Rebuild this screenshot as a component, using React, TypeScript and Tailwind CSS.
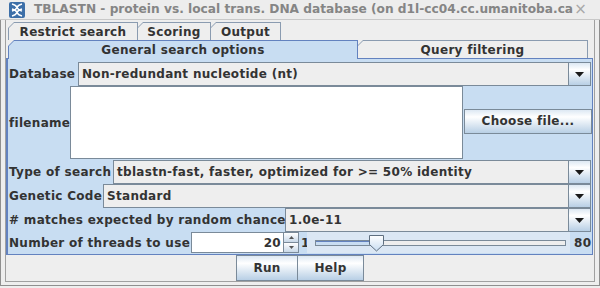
const ink = "text-[#333333]";

function Arrow() {
  return (
    <svg width="9" height="5" viewBox="0 0 9 5">
      <path d="M0 0h9L4.5 5z" fill="#1a1a1a" />
    </svg>
  );
}

function Combo({ value, className }: { value: string; className: string }) {
  return (
    <div className={`flex h-[24px] border border-[#7a8a99] bg-[#eeeeee] ${className}`}>
      <div className={`flex flex-1 items-center pl-[3px] border-r border-[#7a8a99] ${ink}`}>{value}</div>
      <div className="flex w-[21px] items-center justify-center bg-gradient-to-b from-[#dde8f3] via-white via-30% to-[#b8cfe5]">
        <Arrow />
      </div>
    </div>
  );
}

function Tab({ label, className, selected }: { label: string; className: string; selected?: boolean }) {
  return (
    <div
      className={`pt-px pl-px pr-px ${selected ? "bg-[#6382bf] relative z-10 -mb-px h-[19px]" : "h-[18px] bg-[#8a9bb0]"} [clip-path:polygon(6px_0,100%_0,100%_100%,0_100%,0_6px)] ${className}`}
    >
      <div
        className={`flex h-full items-center justify-center ${selected ? "bg-[#c8ddf2]" : "bg-[#eeeeee]"} [clip-path:polygon(5px_0,100%_0,100%_100%,0_100%,0_5px)] ${ink}`}
      >
        {label}
      </div>
    </div>
  );
}

function Button({ label, className }: { label: string; className: string }) {
  return (
    <div
      className={`flex shrink-0 items-center justify-center border border-[#7a8a99] bg-gradient-to-b from-[#dde8f3] via-white via-30% to-[#b8cfe5] ${ink} ${className}`}
    >
      {label}
    </div>
  );
}

export default function App() {
  return (
    <div className="w-[600px] h-[288px] overflow-hidden bg-[#eeeeee] font-['DejaVu_Sans',sans-serif] text-[12px] font-bold leading-none tracking-[0.3px]">
      {/* title bar */}
      <div className="flex h-[20px] items-center border-b border-[#c8c8c8] bg-[#ededed]">
        <svg className="ml-[9px] mr-[9px]" width="16" height="16" viewBox="0 0 16 16">
          <rect x="0" y="0" width="16" height="16" rx="2" fill="#3d6fa8" />
          <path d="M3 2c8 2 2 5 10 7M13 2C5 4 11 7 3 9M3 7c8 2 2 5 10 7M13 7C5 9 11 12 3 14" stroke="#ffffff" strokeWidth="1.4" fill="none" />
        </svg>
        <div className="flex-1 whitespace-nowrap text-[12.2px] tracking-normal text-[#858585]">
          TBLASTN - protein vs. local trans. DNA database (on d1l-cc04.cc.umanitoba.ca
        </div>
        <div className="mr-[13px] text-[15px] font-normal text-[#a8a8a8]">×</div>
      </div>

      <div className="h-[266px] border-l border-[#8f8f8f] border-r border-b">
        <div className="h-[262px] ml-[4px] mr-[4px] border-l border-r border-b border-[#a0a0a0]">
          {/* tab rows */}
          <div className="flex pt-[2px] pl-[2px]">
            <Tab label="Restrict search" className="w-[130px]" />
            <Tab label="Scoring" className="-ml-px w-[74px]" />
            <Tab label="Output" className="-ml-px w-[71px]" />
          </div>
          <div className="flex items-end pl-[2px]">
            <Tab label="General search options" className="w-[350px]" selected />
            <Tab label="Query filtering" className="-ml-px w-[231px]" />
          </div>

          {/* main panel */}
          <div className="w-[587px] h-[197px] border-l-2 border-r border-t border-b border-[#6382bf] bg-[#c8ddf2] pt-[3px] pl-px pr-px">
            <div className="flex items-center">
              <div className={`w-[69px] ${ink}`}>Database</div>
              <Combo value="Non-redundant nucleotide (nt)" className="flex-1" />
            </div>
            <div className="flex h-[74px] items-center">
              <div className={`w-[61px] shrink-0 ${ink}`}>filename</div>
              <div className="h-[73px] w-[393px] shrink-0 self-start border border-[#7a8a99] bg-white" />
              <Button label="Choose file..." className="ml-px mb-[4px] h-[25px] w-[128px]" />
            </div>
            <div className="flex items-center">
              <div className={`w-[104px] ${ink}`}>Type of search</div>
              <Combo value="tblastn-fast, faster, optimized for >= 50% identity" className="flex-1" />
            </div>
            <div className="flex items-center">
              <div className={`w-[94px] ${ink}`}>Genetic Code</div>
              <Combo value="Standard" className="flex-1" />
            </div>
            <div className="flex items-center">
              <div className={`w-[276px] whitespace-nowrap ${ink}`}>
                # matches expected by random chance
              </div>
              <Combo value="1.0e-11" className="flex-1" />
            </div>
            <div className="flex h-[21px] items-center">
              <div className={`w-[182px] shrink-0 whitespace-nowrap ${ink}`}>Number of threads to use</div>
              <div className="flex h-[21px] w-[93px] shrink-0 items-center justify-end border border-[#7a8a99] bg-white pr-[2px]">
                <span className="text-[#333333]">20</span>
              </div>
              <div className="flex h-[21px] w-[15px] shrink-0 flex-col border-t border-r border-b border-[#7a8a99]">
                <div className="flex flex-1 items-center justify-center border-b border-[#7a8a99] bg-gradient-to-b from-white to-[#c8d8e8]">
                  <svg width="5" height="3" viewBox="0 0 5 3"><path d="M0 3h5L2.5 0z" fill="#555" /></svg>
                </div>
                <div className="flex flex-1 items-center justify-center bg-gradient-to-b from-white to-[#c8d8e8]">
                  <svg width="5" height="3" viewBox="0 0 5 3"><path d="M0 0h5L2.5 3z" fill="#555" /></svg>
                </div>
              </div>
              <div className={`ml-[2px] w-[6px] shrink-0 ${ink}`}>1</div>
              <div className="relative flex h-[21px] w-[263px] shrink-0 items-center bg-[#dbe7f4] pl-[8px] pr-[4px]">
                <div className="flex h-[6px] flex-1 border border-[#7a8a99] bg-[#eeeeee]">
                  <div className="h-full w-[60px] border-t border-[#6382bf] bg-[#c8ddf2]" />
                </div>
                <svg className="absolute left-[62px] top-[3px]" width="16" height="17" viewBox="0 0 16 17">
                  <defs>
                    <linearGradient id="th" x1="0" y1="0" x2="0" y2="1">
                      <stop offset="0" stopColor="#ffffff" />
                      <stop offset="1" stopColor="#c8ddf2" />
                    </linearGradient>
                  </defs>
                  <path d="M0.5 0.5h14v9l-7 6.5-7-6.5z" fill="url(#th)" stroke="#5f6f80" />
                </svg>
              </div>
              <div className={`ml-[4px] whitespace-nowrap ${ink}`}>80</div>
            </div>
          </div>

          {/* bottom buttons */}
          <div className="flex justify-center">
            <Button label="Run" className="h-[26px] w-[62px]" />
            <Button label="Help" className="-ml-px h-[26px] w-[67px]" />
          </div>
        </div>
      </div>
    </div>
  );
}
